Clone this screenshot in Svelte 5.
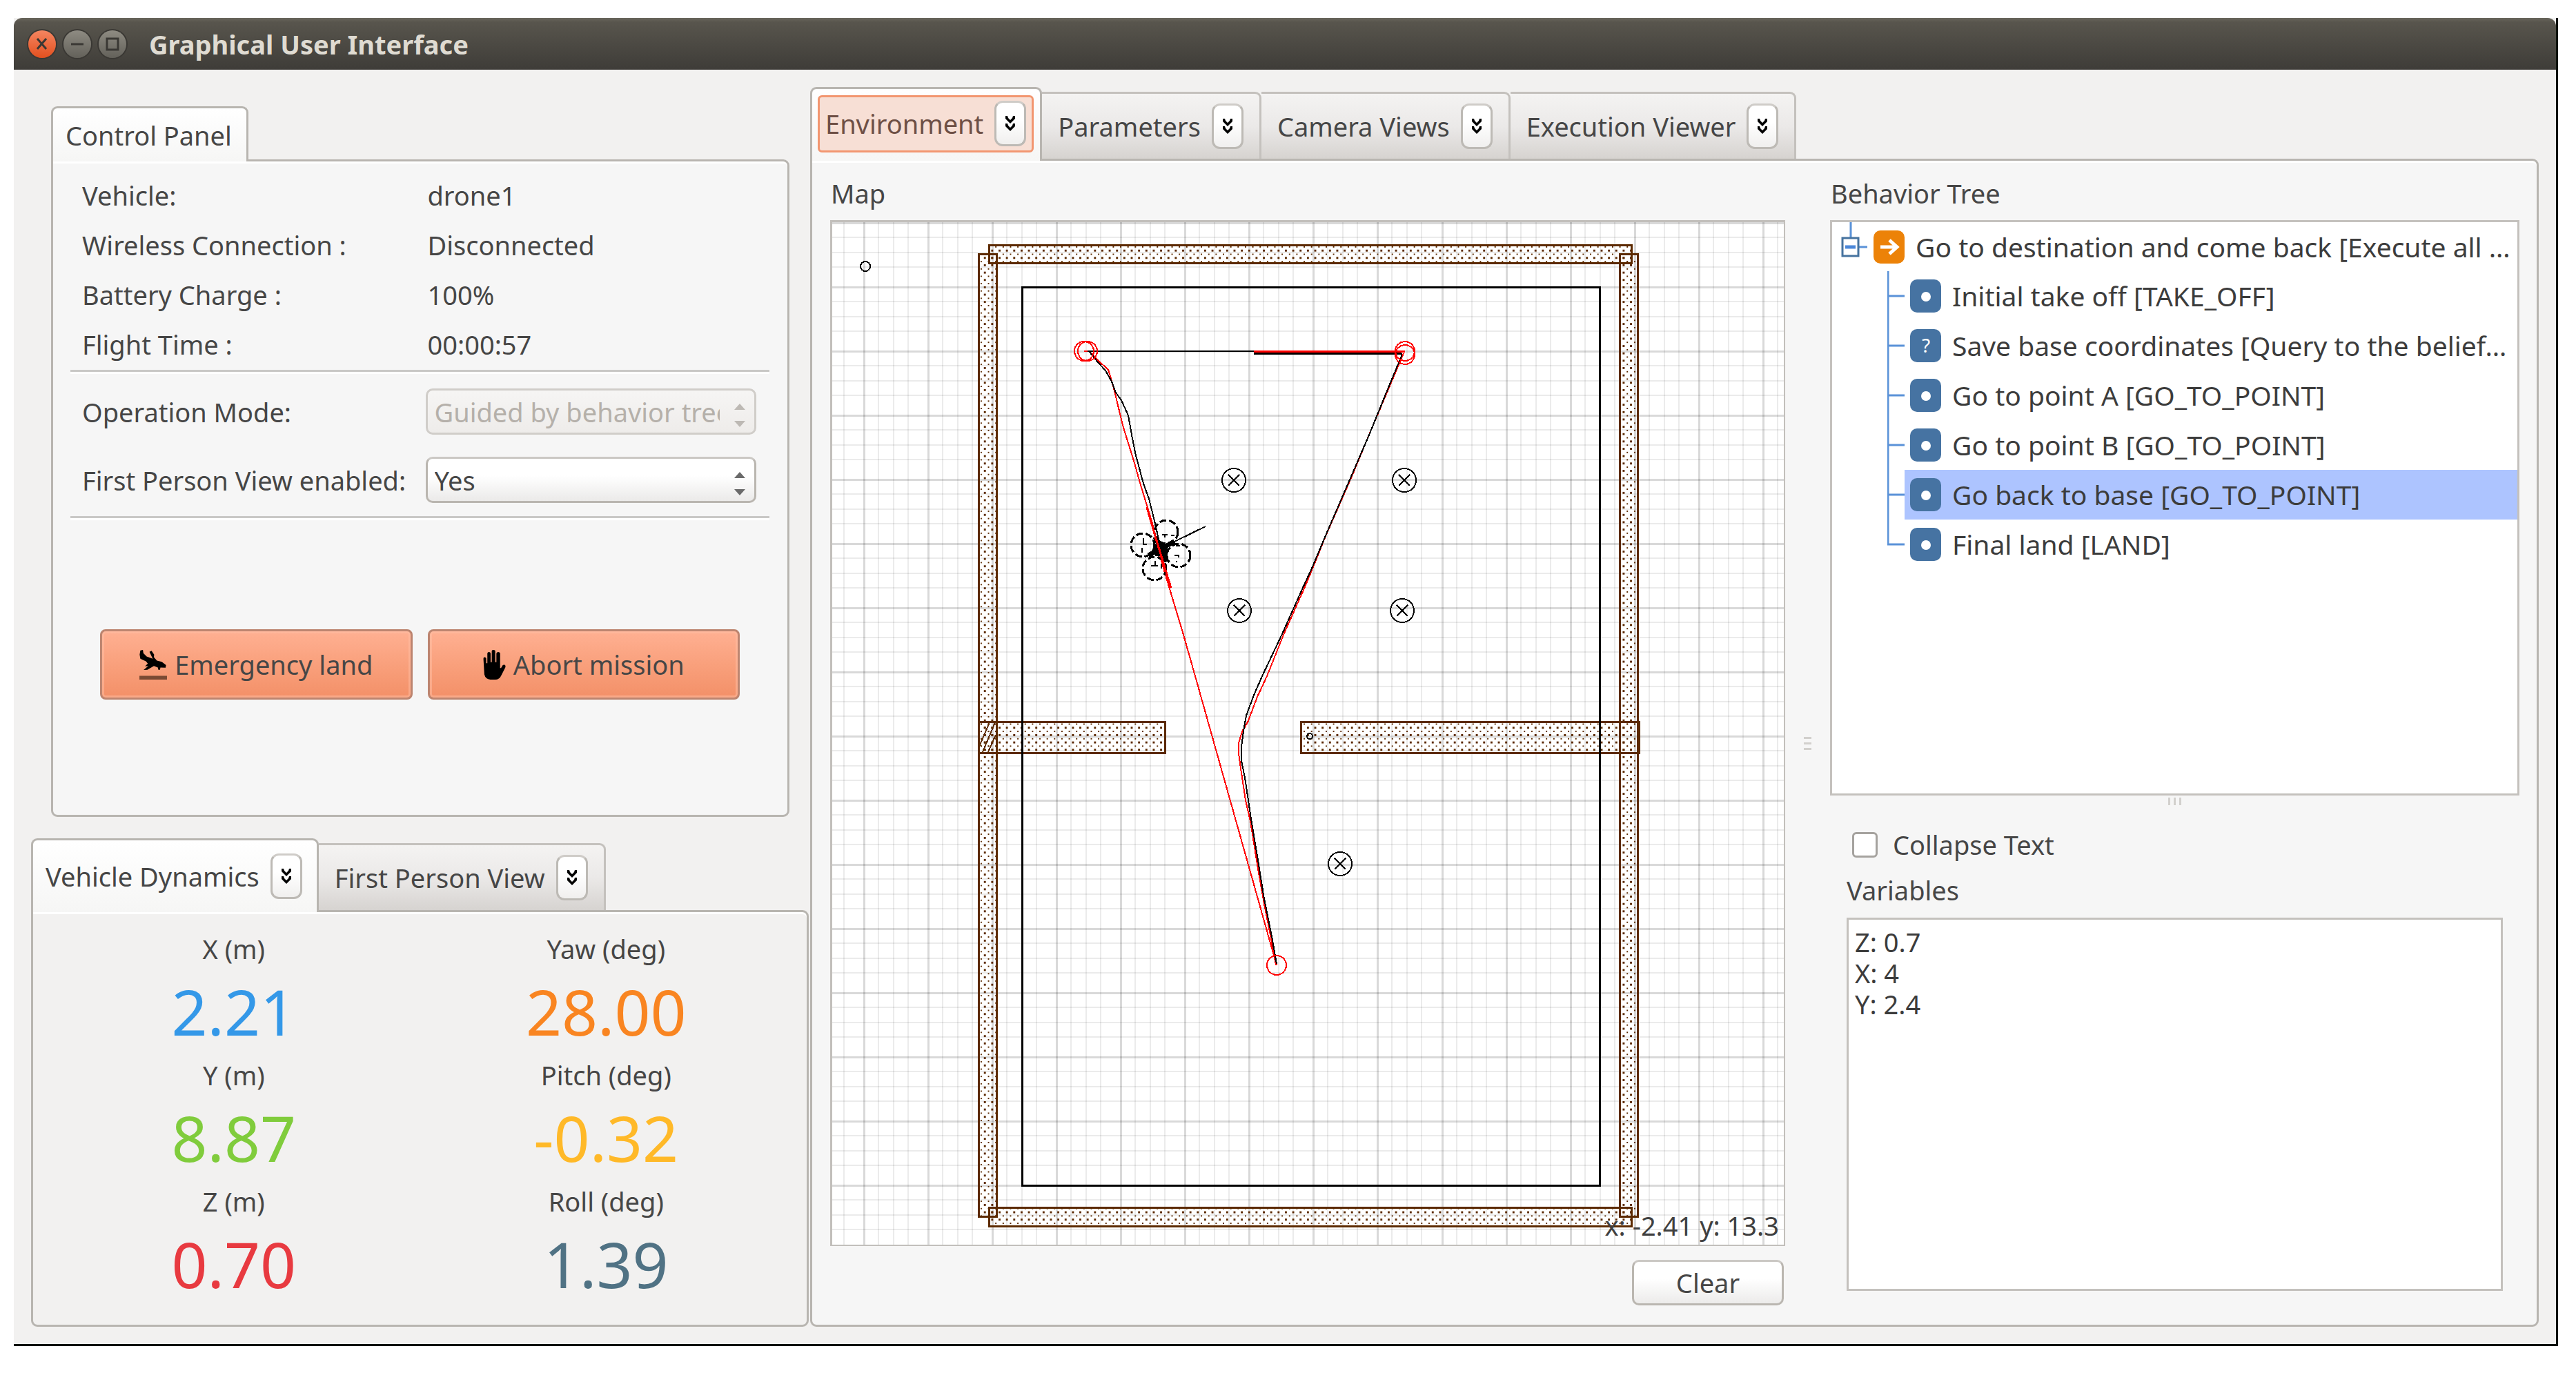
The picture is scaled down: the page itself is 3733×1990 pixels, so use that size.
<script>
  const status = [
    ['Vehicle:', 'drone1'],
    ['Wireless Connection :', 'Disconnected'],
    ['Battery Charge :', '100%'],
    ['Flight Time :', '00:00:57'],
  ];

  const dynamics = [
    { label: 'X (m)', value: '2.21', color: '#3498e8' },
    { label: 'Yaw (deg)', value: '28.00', color: '#f98521' },
    { label: 'Y (m)', value: '8.87', color: '#80cc3c' },
    { label: 'Pitch (deg)', value: '-0.32', color: '#ffb928' },
    { label: 'Z (m)', value: '0.70', color: '#e83a40' },
    { label: 'Roll (deg)', value: '1.39', color: '#507284' },
  ];

  const tasks = [
    { text: 'Initial take off [TAKE_OFF]' },
    { text: 'Save base coordinates [Query to the belief…', query: true },
    { text: 'Go to point A [GO_TO_POINT]' },
    { text: 'Go to point B [GO_TO_POINT]' },
    { text: 'Go back to base [GO_TO_POINT]', selected: true },
    { text: 'Final land [LAND]' },
  ];

  const sideTabs = ['Parameters', 'Camera Views', 'Execution Viewer'];

  // Grid of the map: one major line per metre, three minor lines after it.
  const steps = [0, 21, 43, 64];
  const columns = [];
  const rows = [];
  for (let i = -1; i < 15; i++) {
    for (const s of steps) {
      const x = 1252 + Math.round(i * 93.06) + s;
      if (x > 1206 && x < 2585) columns.push({ at: x, major: s === 0 });
    }
  }
  for (let i = -1; i < 15; i++) {
    for (const s of steps) {
      const y = 416 + i * 93 + s;
      if (y > 322 && y < 1804) rows.push({ at: y, major: s === 0 });
    }
  }

  const walls = [
    [1418, 368, 26, 1395],
    [2347, 368, 26, 1395],
    [1433, 355, 931, 26],
    [1433, 1750, 931, 27],
    [1418, 1046, 270, 45],
    [1885, 1046, 490, 45],
  ];

  const poles = [[1788, 696], [2035, 696], [1796, 885], [2032, 885], [1942, 1252]];
  const goals = [[1571, 509], [1576, 509], [2036, 509], [2036, 514], [1850, 1399]];
  const rotors = [[1690, 771], [1656, 790], [1708, 805], [1673, 824]];

  let mode = $state('tree');
  let view = $state('yes');
  let collapse = $state(false);
  let variables = $state('Z: 0.7\nX: 4\nY: 2.4');
</script>

{#snippet chevron(name)}
  <button class="chevron" type="button" aria-label={`${name} options`}>
    <svg viewBox="0 0 14 22" width="14" height="22" aria-hidden="true">
      <path d="M0 0h3l1 3 3 3 3-3 1-3h3v4l-7 7-7-7zM0 11h3l1 3 3 3 3-3 1-3h3v4l-7 7-7-7z" />
    </svg>
  </button>
{/snippet}

{#snippet arrows()}
  <svg class="arrows" viewBox="0 0 16 34" width="16" height="34" aria-hidden="true">
    <path d="M0 9 8 0l8 9zM0 25h16l-8 9z" />
  </svg>
{/snippet}

<div class="desktop">
  <div class="window">
    <header class="titlebar">
      <button class="round close" type="button" aria-label="Close">
        <svg viewBox="0 0 40 40"><path d="M13 12 26 27M26 12 13 27" /></svg>
      </button>
      <button class="round" type="button" aria-label="Minimize">
        <svg viewBox="0 0 40 40"><path d="M11 20H29" /></svg>
      </button>
      <button class="round" type="button" aria-label="Maximize">
        <svg viewBox="0 0 40 40"><path d="M12 12H28V28H12Z" /></svg>
      </button>
      <h1>Graphical User Interface</h1>
    </header>

    <main class="content">
      <div class="left">
        <section class="control">
          <div class="tabs">
            <div class="tab active plain"><button class="label" type="button">Control Panel</button></div>
          </div>
          <div class="pane light control-pane">
            <dl class="status">
              {#each status as [name, value]}
                <dt>{name}</dt>
                <dd>{value}</dd>
              {/each}
            </dl>
            <hr />
            <div class="options">
              <label for="mode">Operation Mode:</label>
              <div class="select">
                <select id="mode" bind:value={mode} disabled>
                  <option value="tree">Guided by behavior tree</option>
                </select>
                {@render arrows()}
              </div>
              <label for="fpv">First Person View enabled:</label>
              <div class="select">
                <select id="fpv" bind:value={view}>
                  <option value="yes">Yes</option>
                  <option value="no">No</option>
                </select>
                {@render arrows()}
              </div>
            </div>
            <hr />
            <div class="actions">
              <button class="action" type="button">
                <svg viewBox="0 0 118 127" width="40" height="43" aria-hidden="true">
                  <path d="M4 2 15 0 17 14 31 28 57 38 43 8 52 4 63 20 62 31 75 46 96 51 114 65 112 76 90 75 88 85 81 85 79 75 62 69 34 85 18 86 38 69 24 70 36 58 28 49 4 38 1 20z" />
                  <path fill="#7a4a34" d="M0 111H118V127H0z" />
                </svg>
                Emergency land
              </button>
              <button class="action abort" type="button">
                <svg viewBox="0 0 97 128" width="33" height="43" aria-hidden="true">
                  <path d="M1 38Q1 31 6 31T13 36V57H18V15Q19 9 25 9T32 15V53H37V4Q39 0 44 0T52 4V53H57V15Q59 9 65 9T73 14V78H77L84 66Q88 62 94 65Q98 69 95 77L78 110Q70 128 52 128H31Q10 127 5 106Z" />
                </svg>
                Abort mission
              </button>
            </div>
          </div>
        </section>

        <section class="dynamics">
          <div class="tabs">
            <div class="tab active">
              <button class="label" type="button">Vehicle Dynamics</button>
              {@render chevron('Vehicle Dynamics')}
            </div>
            <div class="tab">
              <button class="label" type="button">First Person View</button>
              {@render chevron('First Person View')}
            </div>
          </div>
          <div class="pane readouts">
            {#each dynamics as d}
              <div class="readout">
                <span>{d.label}</span>
                <output style:color={d.color}>{d.value}</output>
              </div>
            {/each}
          </div>
        </section>
      </div>

      <section class="right">
        <div class="tabs">
          <div class="tab active focused">
            <div class="focus">
              <button class="label" type="button">Environment</button>
              {@render chevron('Environment')}
            </div>
          </div>
          {#each sideTabs as name}
            <div class="tab">
              <button class="label" type="button">{name}</button>
              {@render chevron(name)}
            </div>
          {/each}
        </div>

        <div class="pane light environment">
          <div class="map-column">
            <h2>Map</h2>
            <svg class="map" viewBox="1203 319 1384 1487" role="img" aria-label="Map of the flight area">
              <defs>
                <pattern id="dots" width="10.64" height="10.64" patternUnits="userSpaceOnUse">
                  <rect width="2.66" height="2.66" fill="#5c2a00" />
                  <rect x="5.32" y="5.32" width="2.66" height="2.66" fill="#5c2a00" />
                </pattern>
              </defs>
              <rect x="1203" y="319" width="1384" height="1487" fill="#fff" />
              {#each columns as c}
                <line class:major={c.major} class="grid" x1={c.at} x2={c.at} y1="321" y2="1804" />
              {/each}
              {#each rows as r}
                <line class:major={r.major} class="grid" x1="1205" x2="2585" y1={r.at} y2={r.at} />
              {/each}
              <rect class="frame" x="1204" y="320" width="1382" height="1485" />

              {#each walls as [x, y, w, h]}
                <rect class="wall" {x} {y} width={w} height={h} />
              {/each}
              <path class="hatch" d="M1424 1090 1442 1047M1419 1082 1434 1047M1432 1090 1443 1065" />

              <rect class="ink border" x="1481" y="416" width="837" height="1302" />
              <circle class="ink" cx="1254" cy="386" r="7" />
              <circle class="ink" cx="1898" cy="1067" r="4" />

              {#each poles as [x, y]}
                <circle class="ink" cx={x} cy={y} r="17" />
                <path class="ink" d="M{x - 8} {y - 8}l16 16m0-16l-16 16" />
              {/each}

              <path class="red" d="M1571 509 1578 509 1591 522 1606 536 1610 549 1614 563 1628 620 1643 668 1653 703 1670 759 1682 810 1715 920 1732 980 1850 1399" />
              <path class="red" d="M2034 512 2009 571 1984 630 1960 688 1921 777 1900 829 1889 855 1860 920 1836 980 1822 1010 1808 1047 1800 1060 1795 1077 1795 1093 1799 1120 1805 1160 1812 1190 1821 1247 1831 1305 1842 1360 1849 1399" />
              <path class="ink" d="M1576 509H1817" />
              <path class="ink border" d="M1817 512H2031" />
              <path class="ink" d="M2031 512V516L2009 569 1985 628 1960 686 1922 774 1900 826 1887 854 1858 919 1829 980 1816 1010 1806 1037 1802 1060 1799 1082 1799 1103 1804 1127 1813 1187 1823 1247 1832 1303 1843 1357 1850 1397" />
              <path class="red border" d="M1817 509H2036" />
              <path class="ink" d="M1578 509 1591 525 1602 537 1611 553 1617 569 1625 580 1635 602 1640 630 1645 656 1657 701 1665 723 1672 751 1682 794" />
              {#each goals as [x, y]}
                <circle class="red" cx={x} cy={y} r="14" />
              {/each}

              <g>
                {#each rotors as [x, y]}
                  <circle class="rotor" cx={x} cy={y} r="17" />
                {/each}
                <path class="ink" d="M1682 797 1704 784 1747 763" />
                <path class="arm" d="M1664 805 1702 785M1674 778 1691 814" />
                <rect x="1674" y="788" width="18" height="18" />
                <path class="ink" d="M1684 775H1692M1688 775V779M1697 776H1702M1657 780V789H1662M1655 794V801M1704 791H1710M1702 805H1708V808M1704 814H1706M1668 820H1678M1674 813V820M1683 817V824" />
                <path class="red" d="M1662 735 1674 777 1689 826 1697 852" />
              </g>
              <text class="coords" x="2578" y="1791" text-anchor="end">x: -2.41 y: 13.3</text>
            </svg>
            <button class="clear" type="button">Clear</button>
          </div>

          <div class="splitter" aria-hidden="true"><i></i><i></i><i></i></div>

          <div class="tree-column">
            <h2>Behavior Tree</h2>
            <div class="tree">
              <div class="node root">
                <svg class="branch" viewBox="0 0 60 72" width="60" height="72" aria-hidden="true">
                  <path fill="none" stroke="#5a92d8" stroke-width="3" d="M27 0V22M38 36H51" />
                  <rect x="15" y="23" width="23" height="26" fill="#fff" stroke="#46739f" stroke-width="3" />
                  <path stroke="#4a86d8" stroke-width="5" d="M19 36H34" />
                </svg>
                <svg class="icon" viewBox="0 0 45 48" width="45" height="48" aria-hidden="true">
                  <rect width="45" height="48" rx="10" fill="#ec8208" />
                  <path d="M10 24H33M23 14 34 24 23 34" fill="none" stroke="#fff" stroke-width="5" />
                </svg>
                <span>Go to destination and come back [Execute all …</span>
              </div>
              {#each tasks as task, i}
                <div class="node child">
                  <svg class="branch" viewBox="0 0 25 72" width="25" height="72" aria-hidden="true">
                    <path fill="none" stroke="#5a92d8" stroke-width="3" d={i === tasks.length - 1 ? 'M1 0V36H25' : 'M1 0V72M1 36H25'} />
                  </svg>
                  <div class="task" class:selected={task.selected}>
                    <svg class="icon" viewBox="0 0 45 48" width="45" height="48" aria-hidden="true">
                      <rect width="45" height="48" rx="10" fill="#4673a2" />
                      {#if task.query}
                        <text x="23" y="34" text-anchor="middle" font-size="28" fill="#fff">?</text>
                      {:else}
                        <circle cx="23" cy="25" r="7" fill="#fff" />
                      {/if}
                    </svg>
                    <span>{task.text}</span>
                  </div>
                </div>
              {/each}
            </div>
            <div class="handle" aria-hidden="true"><i></i><i></i><i></i></div>
            <label class="collapse"><input type="checkbox" bind:checked={collapse} />Collapse Text</label>
            <label class="variables-label" for="variables">Variables</label>
            <textarea id="variables" bind:value={variables} spellcheck="false"></textarea>
          </div>
        </div>
      </section>
    </main>
  </div>
</div>

<style>
  :global(body) {
    margin: 0;
    background: #fff;
  }

  .desktop {
    box-sizing: border-box;
    min-height: 100vh;
    padding: 26px 26px 39px 20px;
    display: flex;
    flex-direction: column;
    font: 38px/52px 'Noto Sans', 'Open Sans', sans-serif;
    color: #464646;
  }

  .desktop * {
    box-sizing: border-box;
  }

  button,
  select,
  textarea {
    font: inherit;
    color: inherit;
    margin: 0;
  }

  h1,
  h2,
  dl,
  dd {
    margin: 0;
  }

  .window {
    flex: 1;
    display: flex;
    flex-direction: column;
    background: #f2f1f0;
    border: solid #0c120a;
    border-width: 0 3px 3px 0;
  }

  .titlebar {
    height: 75px;
    display: flex;
    align-items: center;
    gap: 11px;
    padding: 0 21px;
    background: linear-gradient(#6a675d, #58554d 8%, #3e3c38);
    border-radius: 12px 12px 0 0;
  }

  h1 {
    margin-left: 22px;
    font-size: 38px;
    font-weight: 700;
    color: #dfdbd2;
  }

  .round {
    width: 40px;
    height: 40px;
    padding: 0;
    border: 0;
    border-radius: 50%;
    background: linear-gradient(#8e8b82, #63615a);
    box-shadow: 0 0 0 2px #3a3834;
  }

  .round svg {
    display: block;
    fill: none;
    stroke: #3a3834;
    stroke-width: 3;
  }

  .close {
    background: linear-gradient(#f58560, #e2501f);
  }

  .content {
    flex: 1;
    display: grid;
    grid-template-columns: minmax(0, 1154fr) minmax(0, 2530fr);
  }

  .left {
    display: flex;
    flex-direction: column;
    gap: 31px;
    padding: 53px 2px 25px 25px;
  }

  .control {
    margin: 0 28px 0 29px;
  }

  .tabs {
    display: flex;
    align-items: flex-end;
  }

  .tab {
    height: 97px;
    display: flex;
    align-items: center;
    gap: 16px;
    padding: 0 23px;
    border: 3px solid #c4c1bd;
    border-left-width: 0;
    border-bottom: 0;
    border-radius: 0 9px 0 0;
    background: linear-gradient(#f4f3f2, #ebe9e8 50%, #d6d3d0);
  }

  .tab.active {
    height: 107px;
    margin-bottom: -3px;
    padding: 0 21px 0 18px;
    position: relative;
    border: 3px solid #b8b5b0;
    border-bottom: 0;
    border-radius: 9px 9px 0 0;
    background: linear-gradient(#fff, #f6f6f5);
  }

  .tab.plain {
    height: 80px;
  }

  .tab.active.focused {
    padding: 0 9px 4px 8px;
  }

  .focus {
    height: 83px;
    display: flex;
    align-items: center;
    gap: 16px;
    padding: 0 8px;
    border: 3px solid #f29670;
    border-radius: 6px;
    background: #f7dfd5;
  }

  .focus .label {
    color: #6e4f45;
  }

  .label {
    padding: 0;
    border: 0;
    background: none;
    white-space: nowrap;
  }

  .chevron {
    width: 46px;
    height: 66px;
    padding: 0;
    display: grid;
    place-items: center;
    border: 3px solid #bdbab5;
    border-top-color: #cfccc8;
    border-radius: 12px;
    background: linear-gradient(#fff 40%, #f0efee);
  }

  .pane {
    border: 3px solid #b8b5b0;
    border-radius: 0 9px 9px 9px;
    background: #f2f1f0;
    box-shadow: inset 0 3px #fff;
  }

  .light {
    background: #f6f6f6;
  }

  .control-pane {
    padding: 13px 26px 167px 25px;
  }

  .status,
  .options {
    display: grid;
    grid-template-columns: minmax(0, 497fr) minmax(0, 479fr);
    padding: 0 19px 0 17px;
    align-items: center;
  }

  .status {
    line-height: 72px;
  }

  .status dd {
    padding-left: 3px;
  }

  hr {
    height: 6px;
    margin: 1px 0;
    border: 0;
    background: linear-gradient(#c9c8c6 50%, #fff 50%);
  }

  .options {
    row-gap: 32px;
    padding-top: 20px;
    padding-bottom: 18px;
  }

  .options label {
    white-space: nowrap;
  }

  .select {
    position: relative;
  }

  select {
    display: block;
    width: 100%;
    height: 67px;
    padding: 0 50px 0 10px;
    appearance: none;
    overflow: hidden;
    text-overflow: clip;
    border: 3px solid #bab6b0;
    border-top-color: #cbc8c4;
    border-radius: 10px;
    background: linear-gradient(#fff 40%, #ebeae9);
  }

  select:disabled {
    opacity: 1;
    color: #b5b0aa;
    border-color: #d0cdc9;
    background: linear-gradient(#f6f5f4, #eeecea);
  }

  .arrows {
    position: absolute;
    right: 16px;
    top: 22px;
    fill: #6a6a6a;
    pointer-events: none;
  }

  select:disabled + .arrows {
    fill: #bdb9b4;
  }

  .actions {
    display: grid;
    grid-template-columns: 1fr 1fr;
    gap: 22px;
    padding: 157px 43px 0;
  }

  .action {
    height: 102px;
    display: flex;
    align-items: center;
    justify-content: center;
    gap: 11px;
    padding: 0;
    border: 3px solid #bd8570;
    border-radius: 8px;
    background: linear-gradient(#ffb092, #f9a07c 50%, #f39068);
    box-shadow: inset 0 0 0 3px #ffc0a680;
    white-space: nowrap;
  }

  .dynamics {
    flex: 1;
    display: flex;
    flex-direction: column;
  }

  .readouts {
    flex: 1;
    display: grid;
    grid-template-columns: 1fr 1fr;
    align-content: start;
    padding: 21px 21px 28px;
  }

  .readout {
    display: flex;
    flex-direction: column;
    text-align: center;
    line-height: 64px;
  }

  output {
    font-size: 91px;
    line-height: 119px;
  }

  .right {
    display: flex;
    flex-direction: column;
    padding: 25px 25px 25px 0;
  }

  .environment {
    flex: 1;
    display: grid;
    grid-template-columns: minmax(0, 1384fr) 65px minmax(0, 999fr);
    padding: 8px 25px 28px 26px;
  }

  h2 {
    height: 78px;
    padding-left: 1px;
    font-size: 38px;
    font-weight: 400;
    line-height: 78px;
  }

  .map-column,
  .tree-column {
    display: flex;
    flex-direction: column;
  }

  .map {
    display: block;
    width: 100%;
    height: auto;
    shape-rendering: crispEdges;
    fill: none;
    stroke-width: 2;
  }

  .frame {
    stroke: #c2bfbb;
    stroke-width: 3;
  }

  .grid {
    stroke: #000;
    stroke-opacity: 0.08;
    stroke-width: 2;
  }

  .grid.major {
    stroke-opacity: 0.15;
    stroke-width: 3;
  }

  .wall {
    fill: url(#dots);
    stroke: #5c2a00;
    stroke-width: 3;
  }

  .hatch {
    stroke: #5c2a00;
  }

  .ink {
    stroke: #000;
  }

  .red {
    stroke: #f00;
  }

  .border {
    stroke-width: 3;
  }

  .rotor {
    stroke: #000;
    stroke-width: 3;
    stroke-dasharray: 10 4;
  }

  .arm {
    stroke: #000;
    stroke-width: 7;
  }

  .map g rect {
    fill: #000;
  }

  .map g .red {
    stroke-width: 3;
  }

  .coords {
    fill: #404040;
    stroke: none;
    font-size: 38px;
  }

  .clear {
    align-self: flex-end;
    width: 220px;
    height: 66px;
    margin: 20px 2px 0 0;
    padding: 0;
    border: 3px solid #bab6b0;
    border-top-color: #cbc8c4;
    border-radius: 10px;
    background: linear-gradient(#fff 40%, #ecebea);
  }

  .splitter {
    align-self: start;
    display: grid;
    gap: 5px;
    padding: 827px 0 0 27px;
  }

  .splitter i {
    width: 11px;
    height: 3px;
    background: #d2d0cd;
  }

  .tree {
    flex: 1;
    border: 3px solid #c4c1bd;
    background: #fff;
    color: #3c3c3c;
    font-size: 39px;
    white-space: nowrap;
    overflow: hidden;
  }

  .node {
    height: 72px;
    display: flex;
    align-items: center;
  }

  .branch,
  .icon {
    display: block;
    flex: none;
  }

  .node.root {
    height: 71px;
  }

  .root span {
    padding-left: 16px;
  }

  .child {
    padding-left: 80px;
  }

  .task {
    flex: 1;
    height: 72px;
    display: flex;
    align-items: center;
    gap: 16px;
    padding-left: 8px;
  }

  .selected {
    background: #adc4ff;
  }

  .handle {
    display: flex;
    justify-content: center;
    gap: 5px;
    padding: 3px 0 27px;
  }

  .handle i {
    width: 3px;
    height: 11px;
    background: #d2d0cd;
  }

  .collapse {
    height: 60px;
    display: flex;
    align-items: center;
    gap: 22px;
    padding-left: 32px;
  }

  input {
    appearance: none;
    width: 37px;
    height: 37px;
    margin: 0;
    border: 3px solid #a5a29e;
    border-radius: 6px;
    background: #fff;
  }

  .variables-label {
    padding: 10px 24px 14px;
  }

  textarea {
    height: 541px;
    margin: 0 24px 49px;
    margin-bottom: 21px;
    padding: 10px 9px;
    resize: none;
    border: 3px solid #c4c1bd;
    border-radius: 0;
    outline: 0;
    background: #fff;
    color: #3c3c3c;
    line-height: 45px;
  }
</style>
